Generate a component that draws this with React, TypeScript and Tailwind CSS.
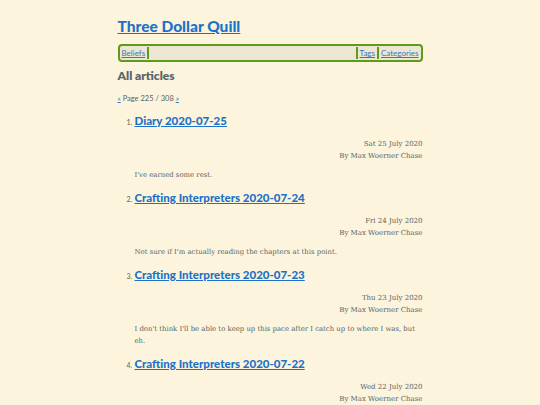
import React from "react";

const posts = [
  { t: "Diary 2020-07-25", d: "Sat 25 July 2020", s: "I've earned some rest." },
  { t: "Crafting Interpreters 2020-07-24", d: "Fri 24 July 2020", s: "Not sure if I'm actually reading the chapters at this point." },
  { t: "Crafting Interpreters 2020-07-23", d: "Thu 23 July 2020", s: "I don't think I'll be able to keep up this pace after I catch up to where I was, but eh." },
  { t: "Crafting Interpreters 2020-07-22", d: "Wed 22 July 2020", s: "" },
];

const head = { fontFamily: "Lato, 'Open Sans', sans-serif" };
const body = { fontFamily: "'DejaVu Serif', 'Liberation Serif', serif" };

export default function App() {
  return (
    <div className="h-[405px] w-[540px] overflow-hidden bg-[#fcf4dc] text-[#5a6366]">
      <div className="mx-auto w-[305px] pt-[15px]">
        <h1 style={head} className="text-[15.5px] font-black leading-[22px]">
          <a href="#" className="text-[#1c72c7] underline">Three Dollar Quill</a>
        </h1>
        <nav style={head} className="mt-[7px] flex h-[18px] items-center rounded-[4px] border-2 border-[#5e9a1c] bg-[#ede6d2] px-[2px] text-[8px]">
          <a href="#" className="text-[#3b78b8] underline">Beliefs</a>
          <span className="ml-[2px] h-[12px] w-[2px] bg-[#5e9a1c]" />
          <span className="flex-1" />
          <span className="h-[12px] w-[2px] bg-[#5e9a1c]" />
          <a href="#" className="ml-[2px] text-[#3b78b8] underline">Tags</a>
          <span className="mx-[2px] h-[12px] w-[2px] bg-[#5e9a1c]" />
          <a href="#" className="text-[#3b78b8] underline">Categories</a>
        </nav>
        <h2 style={head} className="mt-[6px] text-[12px] font-extrabold leading-[16px] text-[#5b6669]">All articles</h2>
        <p style={head} className="mt-[10px] text-[7.5px] leading-[10px]">
          <a href="#" className="text-[#3b78b8] underline">«</a> Page 225 / 308 <a href="#" className="text-[#3b78b8] underline">»</a>
        </p>
        <ol className="mt-[9px] pl-[17px]">
          {posts.map((p, i) => (
            <li key={i} className="mb-[9px]">
              <div className="flex h-[16px] items-baseline">
                <span style={head} className="-ml-[8px] w-[8px] text-[7px]">{i + 1}.</span>
                <a href="#" style={head} className="text-[11.5px] font-black leading-[16px] text-[#1c72c7] underline">{p.t}</a>
              </div>
              <div style={body} className="mt-[9px] text-right text-[7px] leading-[12px]">
                <div>{p.d}</div>
                <div>By Max Woerner Chase</div>
              </div>
              {p.s && (
                <p style={body} className="mt-[7px] text-[6.9px] leading-[12px]">{p.s}</p>
              )}
            </li>
          ))}
        </ol>
      </div>
    </div>
  );
}
